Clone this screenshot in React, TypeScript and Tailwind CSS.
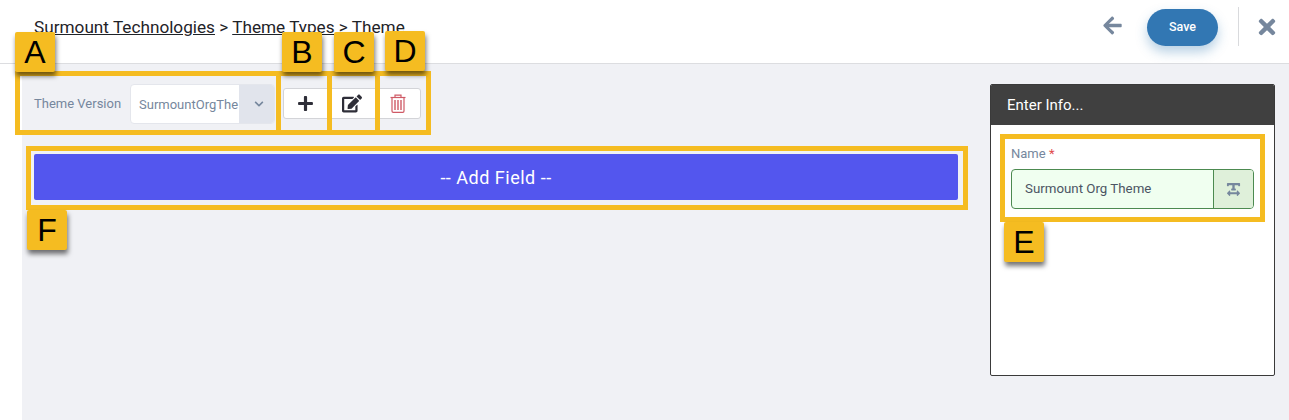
import { FaArrowLeft, FaChevronDown, FaEdit, FaPlus, FaTextWidth, FaTimes } from "react-icons/fa";

function Marker({ className }: { className: string }) {
  return <div className={`pointer-events-none absolute border-[5px] border-[#f5bc21] ${className}`} />;
}

function Tag({ letter, className }: { letter: string; className: string }) {
  return (
    <div
      className={`absolute flex h-10 w-10 items-center justify-center rounded-[2px] bg-[#f5bc21] font-['Liberation_Sans',sans-serif] text-[32px] leading-none text-black shadow-[1px_4px_5px_rgba(0,0,0,0.55)] ${className}`}
    >
      {letter}
    </div>
  );
}

function TrashIcon() {
  return (
    <svg width="16" height="19" viewBox="0 0 16 19" fill="none" stroke="#cf5a66" strokeWidth="1.2">
      <path d="M0.5 3.5h15" />
      <path d="M5 3.5V1.2h6v2.3" />
      <path d="M2 3.5v13.6c0 .8.5 1.3 1.2 1.3h9.6c.7 0 1.2-.5 1.2-1.3V3.5" />
      <path d="M5 6v10M8 6v10M11 6v10" strokeWidth="1.4" />
    </svg>
  );
}

export default function App() {
  return (
    <div className="relative h-[420px] w-[1289px] overflow-hidden bg-white font-['Roboto',sans-serif]">
      <header className="flex h-16 items-center justify-between border-b border-[#dcdde0] bg-white pl-[34px] pr-[12px]">
        <div className="-mt-[7px] text-[17.2px] text-[#1f2328]">
          <a className="underline" href="#">Surmount Technologies</a>
          <span> &gt; </span>
          <a className="underline" href="#">Theme Types</a>
          <span> &gt; Theme</span>
        </div>
        <div className="flex items-center">
          <FaArrowLeft className="mr-[23px] -mt-[12px] h-[21px] w-[23px] text-[#76879d]" />
          <button className="-mt-[9px] h-[37px] w-[71px] rounded-full bg-[#3277b3] text-[12.5px] font-medium text-white shadow-[0_6px_12px_rgba(50,119,179,0.35)]">
            Save
          </button>
          <div className="ml-[20px] -mt-[10px] h-[39px] w-px bg-[#d9dadd]" />
          <FaTimes className="ml-[18px] -mt-[10px] h-[24px] w-[20px] text-[#76879d]" />
        </div>
      </header>

      <div className="flex h-[356px]">
        <div className="w-[22px] bg-white" />
        <main className="flex flex-1 justify-between bg-[#f0f1f5] pl-3 pr-[14px] pt-5">
          <div className="w-[924px]">
            <div className="flex items-start">
              <span className="mt-[10px] w-[96px] text-[13px] text-[#76879d]">Theme Version</span>
              <div className="flex h-10 w-[145px] overflow-hidden rounded-[4px] border border-[#e4e6ec] bg-white">
                <span className="w-[108px] overflow-hidden whitespace-nowrap pl-2 pt-[11px] text-[13px] leading-[18px] text-[#76879d]">
                  SurmountOrgThe
                </span>
                <span className="flex flex-1 items-center justify-center bg-[#e1e4ec] pl-[5px]">
                  <FaChevronDown className="h-[10px] w-[10px] text-[#76879d]" />
                </span>
              </div>
              <div className="ml-2 mt-1 flex h-[31px] w-[138px] rounded-[3px] border border-[#d3d4d8] bg-white">
                <button className="flex flex-1 items-center justify-center pr-[2px] text-[#2e2e38]"><FaPlus className="h-[17px] w-[17px]" /></button>
                <button className="flex flex-1 items-center justify-center pl-px text-[#2e2e38]"><FaEdit className="h-[19px] w-[20px]" /></button>
                <button className="flex flex-1 items-center justify-center pl-[3px]"><TrashIcon /></button>
              </div>
            </div>
            <button className="mt-[30px] h-[46px] w-full rounded-[2px] bg-[#5356ee] text-[18px] tracking-[0.5px] text-white">
              -- Add Field --
            </button>
          </div>

          <aside className="h-[292px] w-[285px] overflow-hidden rounded-[2px] border border-[#3a3a3a] bg-white">
            <div className="flex h-10 items-center bg-[#404040] pl-4 text-[15px] text-white">Enter Info...</div>
            <div className="px-5 pt-5">
              <label className="block text-[13px] leading-[18px] text-[#76879d]">
                Name <span className="text-[#e04b4b]">*</span>
              </label>
              <div className="mt-[6px] flex h-10 w-[243px] overflow-hidden rounded-[4px] border border-[#4c8a50] bg-[#f0fff0]">
                <span className="flex-1 pl-[13px] pt-[9px] text-[13.3px] leading-5 text-[#4b5563]">Surmount Org Theme</span>
                <span className="flex w-10 items-center justify-center border-l border-[#4c8a50] bg-[#dff0da]">
                  <FaTextWidth className="h-[15px] w-[15px] text-[#76879d]" />
                </span>
              </div>
            </div>
          </aside>
        </main>
      </div>

      <Marker className="left-[15px] top-[71px] h-[64px] w-[266px]" />
      <Marker className="left-[276px] top-[71px] h-[64px] w-[56px]" />
      <Marker className="left-[327px] top-[71px] h-[64px] w-[53px]" />
      <Marker className="left-[375px] top-[71px] h-[64px] w-[56px]" />
      <Marker className="left-[26px] top-[146px] h-[64px] w-[942px]" />
      <Marker className="left-[1000px] top-[134px] h-[88px] w-[265px]" />

      <Tag letter="A" className="left-[15px] top-[32px]" />
      <Tag letter="B" className="left-[282px] top-[32px]" />
      <Tag letter="C" className="left-[334px] top-[32px]" />
      <Tag letter="D" className="left-[385px] top-[31px]" />
      <Tag letter="E" className="left-[1004px] top-[222px]" />
      <Tag letter="F" className="left-[27px] top-[210px]" />
    </div>
  );
}
